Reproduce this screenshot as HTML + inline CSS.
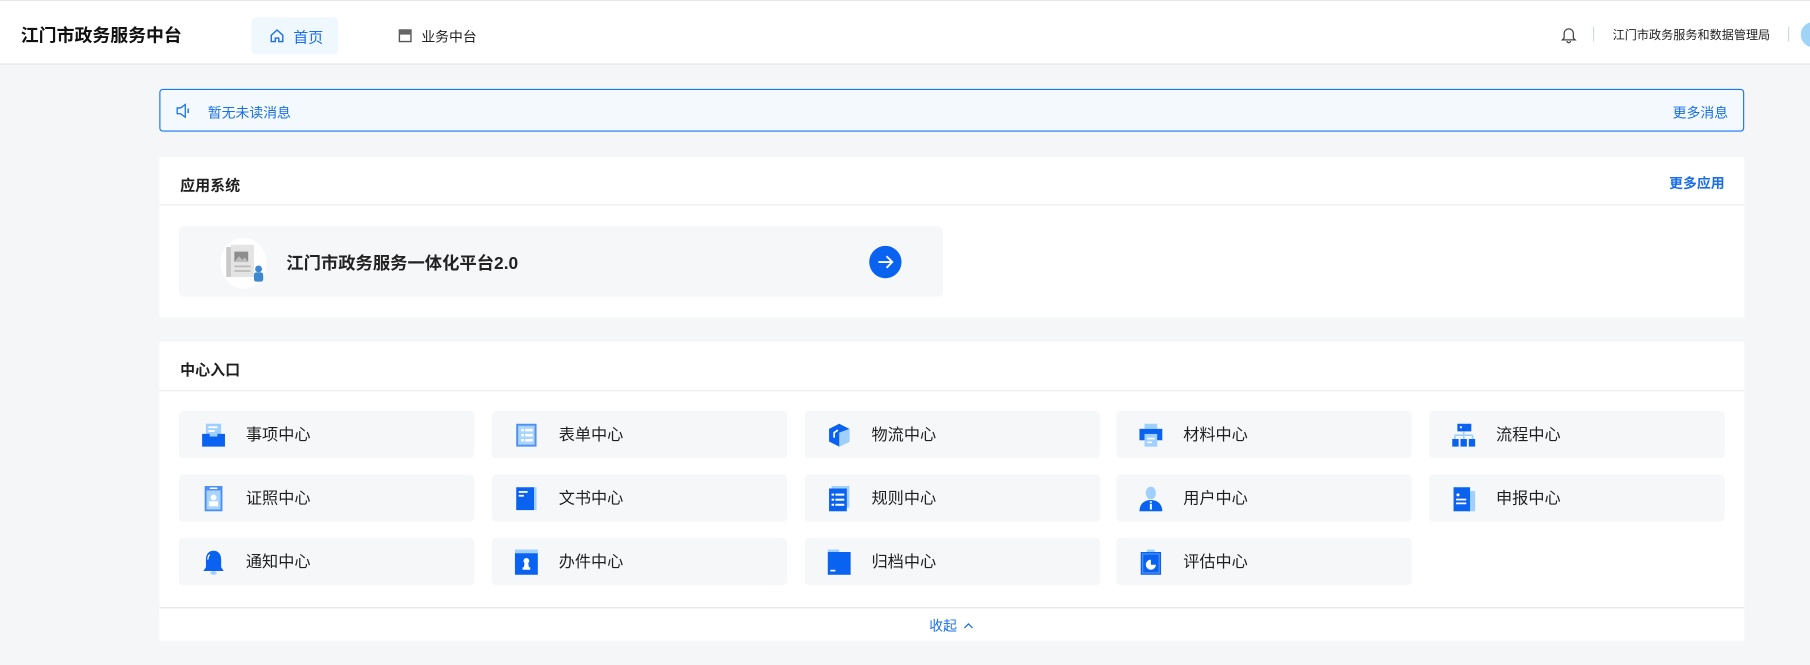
<!DOCTYPE html>
<html><head><meta charset="utf-8"><style>
html,body{margin:0;padding:0;width:1810px;height:665px;overflow:hidden;background:#f5f6f8;}
#w{position:absolute;left:0;top:0;width:1568px;height:576px;transform:scale(1.15434);transform-origin:0 0;font-family:"Liberation Sans","Noto Sans CJK SC",sans-serif;color:#1f1f1f;}
.a{position:absolute;}
.hdr{left:0;top:0;width:1568px;height:56px;background:#fff;border-bottom:1px solid #e6e6e6;border-top:1px solid #e8e8e8;box-sizing:border-box;}
.card{background:#fff;left:138px;width:1373px;}
.item{position:absolute;width:256px;height:41px;background:#f6f7f9;border-radius:4px;}
.item svg{position:absolute;left:19px;top:10px;}
.item span{position:absolute;left:58px;top:0;line-height:41px;font-size:14px;color:#1f1f1f;}
</style></head><body><div id="w">
<div class="a hdr">
 <div class="a" style="left:18px;top:18px;font-size:15.5px;font-weight:bold;color:#111;">江门市政务服务中台</div>
 <div class="a" style="left:218px;top:14px;width:75px;height:32px;background:#eff7ff;border-radius:4px;"></div>
 <svg class="a" style="left:233px;top:23px" width="14" height="14" viewBox="0 0 14 14"><path d="M2 6.5L7 2l5 4.5V12H8.5V9h-3v3H2z" fill="none" stroke="#1a6fe8" stroke-width="1.2"/></svg>
 <div class="a" style="left:254px;top:21px;font-size:13px;color:#1a6fe8;">首页</div>
 <svg class="a" style="left:345px;top:24px" width="12" height="12" viewBox="0 0 12 12"><rect x="1" y="1" width="10" height="10" fill="none" stroke="#555" stroke-width="1.2"/><rect x="1" y="1" width="10" height="4" fill="#666"/></svg>
 <div class="a" style="left:365px;top:22px;font-size:12px;color:#222;">业务中台</div>
 <svg class="a" style="left:1352px;top:21px" width="14" height="16" viewBox="0 0 14 16"><path d="M3 11V7a4 4 0 0 1 8 0v4l1.5 1.5h-11z M5.5 13.5a1.5 1.5 0 0 0 3 0" fill="none" stroke="#444" stroke-width="1.1"/></svg>
 <div class="a" style="left:1380px;top:22px;width:1px;height:13px;background:#cfd8e3;"></div>
 <div class="a" style="left:1397px;top:22px;font-size:10.5px;color:#222;">江门市政务服务和数据管理局</div>
 <div class="a" style="left:1549px;top:22px;width:1px;height:13px;background:#cfd8e3;"></div>
 <div class="a" style="left:1560px;top:18px;width:22px;height:22px;border-radius:50%;background:#9fd3f7;"></div>
</div>
<div class="a" style="left:138px;top:77px;width:1371px;height:35px;border:1px solid #1677ff;border-radius:3px;background:#f3f9fd;"></div>
<svg class="a" style="left:152px;top:89px" width="16" height="14" viewBox="0 0 16 14"><path d="M1.5 4.5h3l4-3v11l-4-3h-3z" fill="none" stroke="#1a6fe8" stroke-width="1.1"/><path d="M11 5v4" stroke="#1a6fe8" stroke-width="1.2"/></svg>
<div class="a" style="left:180px;top:89px;font-size:12px;color:#1a6fe8;">暂无未读消息</div>
<div class="a" style="left:1449px;top:89px;font-size:12px;color:#1a6fe8;">更多消息</div>

<div class="a card" style="top:136px;height:139px;">
 <div class="a" style="left:18px;top:14px;font-size:13px;font-weight:bold;">应用系统</div>
 <div class="a" style="left:1308px;top:14px;font-size:12px;font-weight:bold;color:#1a6fe8;">更多应用</div>
 <div class="a" style="left:0;top:41px;width:1373px;height:1px;background:#ececec;"></div>
 <div class="a" style="left:17px;top:60px;width:662px;height:61px;background:#f6f7f9;border-radius:4px;"></div>
 <div class="a" style="left:53px;top:70px;width:40px;height:44px;border-radius:50%;background:#fff;"></div>
 <svg class="a" style="left:54px;top:72px" width="40" height="40" viewBox="0 0 40 40"><rect x="4" y="6" width="18" height="26" fill="#c9c9c9"/><rect x="8" y="4" width="20" height="28" fill="#e4e4e4"/><rect x="11" y="10" width="12" height="9" fill="#8d8d8d"/><path d="M11 19l4-5 3 3 2-2 3 4z" fill="#bdbdbd"/><rect x="11" y="22" width="14" height="1.5" fill="#bbb"/><rect x="11" y="26" width="14" height="1.5" fill="#bbb"/><circle cx="32" cy="25" r="3" fill="#3e88d0"/><rect x="28" y="28" width="8" height="8" rx="2" fill="#3e88d0"/></svg>
 <div class="a" style="left:110px;top:81px;font-size:15px;font-weight:600;color:#222;">江门市政务服务一体化平台2.0</div>
 <div class="a" style="left:615px;top:77px;width:28px;height:28px;border-radius:50%;background:#0a62f0;"></div>
 <svg class="a" style="left:621px;top:83px" width="16" height="16" viewBox="0 0 16 16"><path d="M2 8h12M9 3l5 5-5 5" fill="none" stroke="#fff" stroke-width="1.6"/></svg>
</div>

<div class="a card" style="top:296px;height:259px;">
 <div class="a" style="left:18px;top:14px;font-size:13px;font-weight:bold;">中心入口</div>
 <div class="a" style="left:0;top:42px;width:1373px;height:1px;background:#ececec;"></div>
 <div class="a" style="left:0;top:230px;width:1373px;height:1px;background:#e6e6e6;"></div>
 <div class="a" style="left:667px;top:237px;font-size:12px;color:#1a6fe8;">收起</div>
 <svg class="a" style="left:696px;top:242px" width="10" height="8" viewBox="0 0 10 8"><path d="M1.5 6L5 2.5 8.5 6" fill="none" stroke="#1a6fe8" stroke-width="1.1"/></svg>

 <div class="item" style="left:17px;top:60px"><svg width="22" height="22" viewBox="0 0 20 20"><rect x="4" y="1" width="12" height="10" fill="#9fd0ff"/><rect x="6" y="3" width="7" height="1.5" fill="#fff"/><rect x="6" y="6" width="5" height="1.5" fill="#fff"/><path d="M1 9h6v2h6V9h6v10H1z" fill="#0a62f0"/></svg><span>事项中心</span></div>
 <div class="item" style="left:288px;top:60px"><svg width="22" height="22" viewBox="0 0 20 20"><rect x="2" y="1" width="16" height="18" fill="#4c90f5"/><rect x="3.5" y="2.5" width="13" height="15" fill="#a8d4ff"/><g fill="#fff"><rect x="6" y="5" width="2" height="2"/><rect x="9" y="5" width="6" height="2"/><rect x="6" y="9" width="2" height="2"/><rect x="9" y="9" width="6" height="2"/><rect x="6" y="13" width="2" height="2"/><rect x="9" y="13" width="6" height="2"/></g></svg><span>表单中心</span></div>
 <div class="item" style="left:559px;top:60px"><svg width="22" height="22" viewBox="0 0 20 20"><path d="M10 1l8 4v10l-8 4-8-4V5z" fill="#0a62f0"/><path d="M10 8l8-3v10l-8 4z" fill="#9fd0ff"/><path d="M6 12V8l3-2" fill="none" stroke="#fff" stroke-width="1.3"/></svg><span>物流中心</span></div>
 <div class="item" style="left:829px;top:60px"><svg width="22" height="22" viewBox="0 0 20 20"><rect x="5" y="1" width="10" height="4" fill="#9fd0ff"/><rect x="1" y="5" width="18" height="9" fill="#0a62f0"/><rect x="5" y="9" width="10" height="10" fill="#9fd0ff"/><rect x="7" y="12" width="6" height="1.3" fill="#fff"/><rect x="7" y="15" width="4" height="1.3" fill="#fff"/></svg><span>材料中心</span></div>
 <div class="item" style="left:1100px;top:60px"><svg width="22" height="22" viewBox="0 0 20 20"><rect x="5" y="1" width="11" height="6" fill="#0a62f0"/><rect x="7" y="3" width="1.5" height="1.5" fill="#fff"/><path d="M10 7v3M3 10h14M3 10v3M10 10v3M17 10v3" stroke="#9fd0ff" stroke-width="1.3" fill="none"/><rect x="1" y="13" width="5" height="6" fill="#0a62f0"/><rect x="7.5" y="13" width="5" height="6" fill="#0a62f0"/><rect x="14" y="13" width="5" height="6" fill="#0a62f0"/></svg><span>流程中心</span></div>

 <div class="item" style="left:17px;top:115px"><svg width="22" height="22" viewBox="0 0 20 20"><rect x="3" y="0" width="14" height="20" fill="#4c90f5"/><rect x="4.5" y="3.5" width="11" height="15" fill="#a8d4ff"/><rect x="7" y="1.2" width="6" height="1.2" fill="#fff"/><circle cx="10" cy="9" r="2.3" fill="#fff"/><rect x="6.5" y="12" width="7" height="4" fill="#fff"/></svg><span>证照中心</span></div>
 <div class="item" style="left:288px;top:115px"><svg width="22" height="22" viewBox="0 0 20 20"><rect x="13" y="1" width="5" height="18" fill="#9fd0ff"/><rect x="2" y="1" width="14" height="18" fill="#0a62f0"/><rect x="4" y="4" width="7" height="1.4" fill="#fff"/><rect x="4" y="7" width="4" height="1.4" fill="#fff"/></svg><span>文书中心</span></div>
 <div class="item" style="left:559px;top:115px"><svg width="22" height="22" viewBox="0 0 20 20"><rect x="4" y="0" width="14" height="17" fill="#9fd0ff"/><rect x="2" y="2" width="14" height="18" fill="#0a62f0"/><g fill="#fff"><rect x="4" y="6" width="2" height="1.6"/><rect x="7" y="6" width="7" height="1.6"/><rect x="4" y="10" width="2" height="1.6"/><rect x="7" y="10" width="7" height="1.6"/><rect x="4" y="14" width="2" height="1.6"/><rect x="7" y="14" width="7" height="1.6"/></g></svg><span>规则中心</span></div>
 <div class="item" style="left:829px;top:115px"><svg width="22" height="22" viewBox="0 0 20 20"><ellipse cx="10" cy="5.5" rx="4" ry="5" fill="#9fd0ff"/><path d="M1 20c0-6 4-9 9-9s9 3 9 9z" fill="#0a62f0"/><rect x="9.2" y="14" width="1.6" height="4.5" fill="#fff"/><rect x="9.2" y="12" width="1.6" height="1.2" fill="#fff"/></svg><span>用户中心</span></div>
 <div class="item" style="left:1100px;top:115px"><svg width="22" height="22" viewBox="0 0 20 20"><rect x="12" y="4" width="7" height="16" fill="#9fd0ff"/><rect x="2" y="1" width="13" height="19" fill="#0a62f0"/><circle cx="5.5" cy="7" r="1.2" fill="#fff"/><rect x="4" y="10" width="8" height="1.4" fill="#fff"/><rect x="4" y="13" width="8" height="1.4" fill="#fff"/></svg><span>申报中心</span></div>

 <div class="item" style="left:17px;top:170px"><svg width="22" height="22" viewBox="0 0 20 20"><path d="M10 1c4 0 6 3 6 7v6l2 3H2l2-3V8c0-4 2-7 6-7z" fill="#0a62f0"/><path d="M7 4c-1 1-1.5 2-1.5 4" stroke="#fff" stroke-width="1" fill="none"/><ellipse cx="10" cy="18.5" rx="2.5" ry="1.5" fill="#9fd0ff"/></svg><span>通知中心</span></div>
 <div class="item" style="left:288px;top:170px"><svg width="22" height="22" viewBox="0 0 20 20"><rect x="1" y="0" width="18" height="4" fill="#9fd0ff"/><rect x="1" y="3" width="18" height="17" fill="#0a62f0"/><circle cx="10" cy="9" r="2.3" fill="#fff"/><path d="M8.5 11h3l.5 3h1v2H7v-2h1z" fill="#fff"/></svg><span>办件中心</span></div>
 <div class="item" style="left:559px;top:170px"><svg width="22" height="22" viewBox="0 0 20 20"><rect x="1" y="0" width="9" height="3" fill="#9fd0ff"/><rect x="1" y="2" width="18" height="18" fill="#0a62f0"/><rect x="3" y="16" width="4" height="1.3" fill="#fff"/></svg><span>归档中心</span></div>
 <div class="item" style="left:829px;top:170px"><svg width="22" height="22" viewBox="0 0 20 20"><rect x="7" y="0" width="6" height="4" fill="#9fd0ff"/><rect x="2" y="2" width="16" height="18" fill="#0a62f0"/><rect x="3.5" y="3.5" width="13" height="15" fill="#0a62f0" stroke="#4c90f5"/><path d="M10 8a4 4 0 1 0 4 4h-4z" fill="#fff"/></svg><span>评估中心</span></div>
</div>
</div></body></html>
